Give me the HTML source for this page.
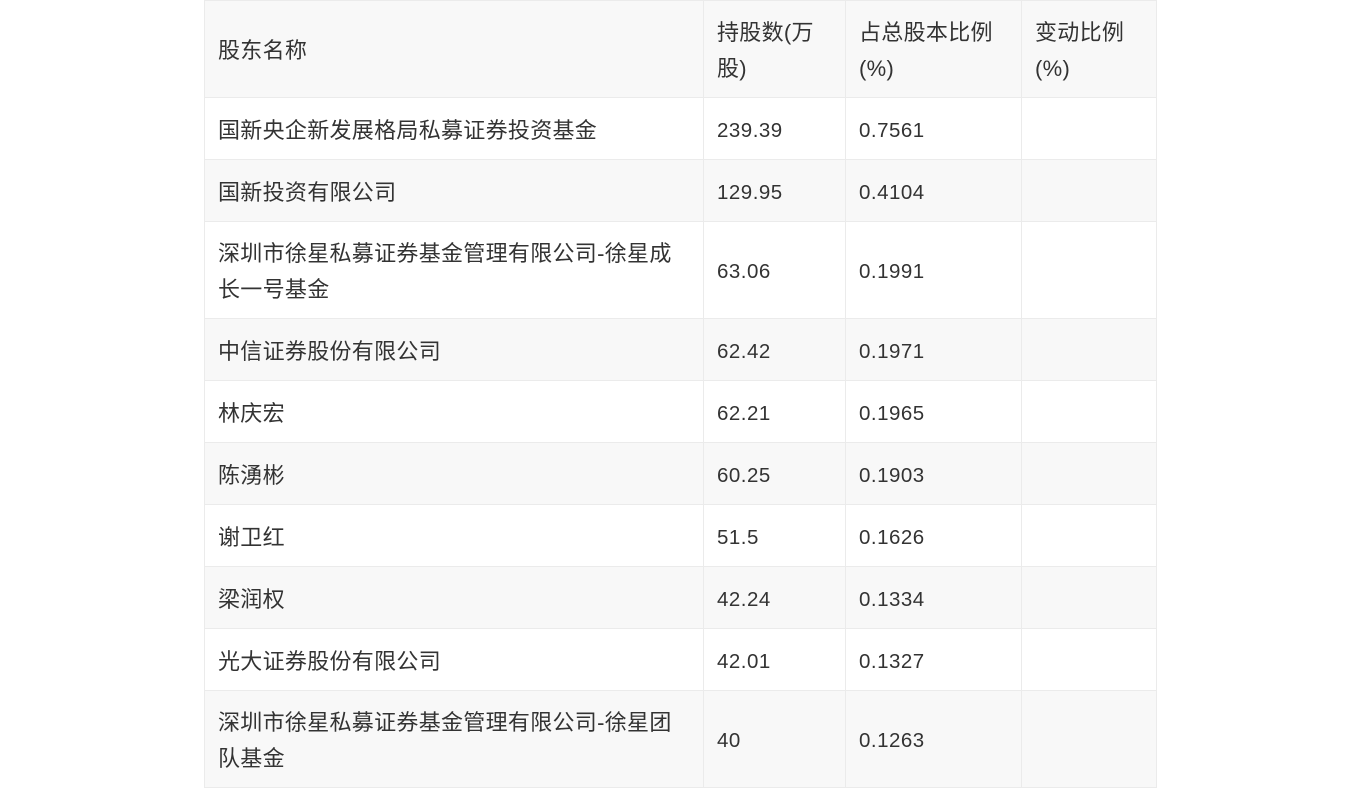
<!DOCTYPE html>
<html><head><meta charset="utf-8"><style>
body{margin:0;background:#fff;width:1360px;height:787px;overflow:hidden}
table{position:absolute;left:204px;top:0;border-collapse:collapse;width:952px;table-layout:fixed;font-family:"Liberation Sans","Noto Sans CJK SC",sans-serif;font-size:22px;color:#333;line-height:36px}
td{border:1px solid #ebebeb;padding:4px 13px 0 13px;vertical-align:middle;letter-spacing:0.3px}
td.n{font-size:20.5px;letter-spacing:0.5px}
tr{height:62px}
tr.g{background:#f8f8f8}
tr.h{height:97px}
</style></head><body>
<table>
<colgroup><col style="width:499px"><col style="width:142px"><col style="width:176px"><col style="width:135px"></colgroup>
<tr class="g h"><td>股东名称</td><td>持股数(万股)</td><td>占总股本比例(%)</td><td>变动比例(%)</td></tr>
<tr><td>国新央企新发展格局私募证券投资基金</td><td class="n">239.39</td><td class="n">0.7561</td><td></td></tr>
<tr class="g"><td>国新投资有限公司</td><td class="n">129.95</td><td class="n">0.4104</td><td></td></tr>
<tr class="h"><td>深圳市徐星私募证券基金管理有限公司-徐星成长一号基金</td><td class="n">63.06</td><td class="n">0.1991</td><td></td></tr>
<tr class="g"><td>中信证券股份有限公司</td><td class="n">62.42</td><td class="n">0.1971</td><td></td></tr>
<tr><td>林庆宏</td><td class="n">62.21</td><td class="n">0.1965</td><td></td></tr>
<tr class="g"><td>陈湧彬</td><td class="n">60.25</td><td class="n">0.1903</td><td></td></tr>
<tr><td>谢卫红</td><td class="n">51.5</td><td class="n">0.1626</td><td></td></tr>
<tr class="g"><td>梁润权</td><td class="n">42.24</td><td class="n">0.1334</td><td></td></tr>
<tr><td>光大证券股份有限公司</td><td class="n">42.01</td><td class="n">0.1327</td><td></td></tr>
<tr class="g h"><td>深圳市徐星私募证券基金管理有限公司-徐星团队基金</td><td class="n">40</td><td class="n">0.1263</td><td></td></tr>
</table>
</body></html>
